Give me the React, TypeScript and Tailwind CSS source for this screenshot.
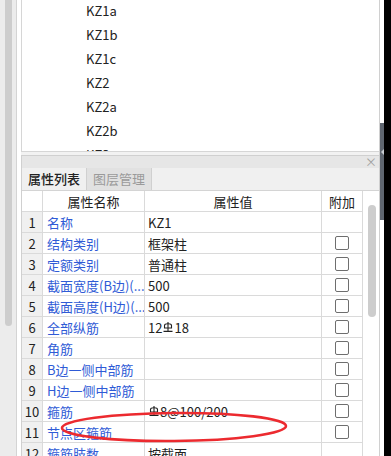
import React from 'react'

const FONT = { fontFamily: '"Noto Sans CJK SC", "Noto Sans", sans-serif' }

const listItems = ['KZ1a', 'KZ1b', 'KZ1c', 'KZ2', 'KZ2a', 'KZ2b', 'KZ3']

// 三级钢符号
function Rebar() {
  return (
    <svg width="10" height="10" viewBox="0 0 10 10" className="mx-[1px]">
      <path d="M1.5 3.5 Q1.5 1.8 5 1.8 Q8.5 1.8 8.5 3.5 L8.5 6 L1.5 6 Z" fill="none" stroke="#222" strokeWidth="1.1" />
      <path d="M5 0 V9 M0.5 9.4 H9.5" fill="none" stroke="#222" strokeWidth="1.1" />
    </svg>
  )
}

type Row = { name: string; value?: React.ReactNode; check: boolean }

const rows: Row[] = [
  { name: '名称', value: 'KZ1', check: false },
  { name: '结构类别', value: '框架柱', check: true },
  { name: '定额类别', value: '普通柱', check: true },
  { name: '截面宽度(B边)(...', value: '500', check: true },
  { name: '截面高度(H边)(...', value: '500', check: true },
  { name: '全部纵筋', value: <>12<Rebar />18</>, check: true },
  { name: '角筋', check: true },
  { name: 'B边一侧中部筋', check: true },
  { name: 'H边一侧中部筋', check: true },
  { name: '箍筋', value: <><Rebar />8@100/200</>, check: true },
  { name: '节点区箍筋', check: true },
  { name: '箍筋肢数', value: '按截面', check: false },
]

const cell = 'h-[21px] border-r border-b border-[#dadada] flex items-center text-[13px] leading-none'

export default function App() {
  return (
    <div className="relative w-[391px] h-[456px] overflow-hidden flex bg-white text-[#222]" style={FONT}>
      {/* left gutter with scrollbar */}
      <div className="w-[16px] shrink-0 bg-[#ececec] pl-[5px]">
        <div className="w-[7px] h-[326px] bg-[#cdcdcd] rounded-b-[4px]" />
      </div>

      {/* main pane */}
      <div className="w-[363px] shrink-0 border-l border-[#d4d4d4] pl-[4px] flex flex-col">
        {/* component list */}
        <div className="h-[152px] shrink-0 border-l border-b border-[#d6d6d6] overflow-hidden bg-white">
          <div className="-mt-[1px] pl-[64px]">
            {listItems.map((k) => (
              <div key={k} className="h-[24px] flex items-center text-[13px] text-[#222]">{k}</div>
            ))}
          </div>
        </div>

        <div className="h-[3px] shrink-0 bg-[#f2f2f2]" />

        {/* property panel */}
        <div className="flex-1 flex flex-col border-l border-t border-[#d0d0d0] min-h-0">
          <div className="h-[12px] shrink-0 bg-[#e6e6e6] flex items-center justify-end pr-[2px]">
            <span className="text-[12px] leading-none text-[#a0a0a0]">×</span>
          </div>
          <div className="h-[23px] shrink-0 bg-[#f0f0f0] border-b border-[#d4d4d4] flex">
            <div className="w-[65px] border-r border-[#d0d0d0] flex items-center justify-center text-[13px] font-medium text-[#222]">属性列表</div>
            <div className="w-[65px] bg-[#e1e1e1] border-r border-[#d0d0d0] flex items-center justify-center text-[13px] text-[#9a9a9a]">图层管理</div>
          </div>

          <div className="flex flex-1 min-h-0">
            <div className="grid grid-cols-[21px_102px_177px_41px] content-start">
              <div className={cell} />
              <div className={`${cell} justify-center`}>属性名称</div>
              <div className={`${cell} justify-center`}>属性值</div>
              <div className={`${cell} justify-center`}>附加</div>
              {rows.map((r, i) => (
                <React.Fragment key={i}>
                  <div className={`${cell} justify-center bg-[#f0f0f0]`}>{i + 1}</div>
                  <div className={`${cell} pl-[4px] text-[#2f5bd6] whitespace-nowrap overflow-hidden`}>{r.name}</div>
                  <div className={`${cell} pl-[3px] whitespace-nowrap`}>{r.value}</div>
                  <div className={`${cell} justify-center`}>
                    {r.check && <div className="w-[14px] h-[14px] border border-[#6e6e6e] rounded-[2px] bg-white" />}
                  </div>
                </React.Fragment>
              ))}
            </div>
            <div className="flex-1 pl-[5px] pt-[14px]">
              <div className="w-[8px] h-[112px] bg-[#cdcdcd] rounded-full" />
            </div>
          </div>
        </div>
      </div>

      {/* right strip */}
      <div className="w-[5px] shrink-0 border-l border-[#d0d0d0] bg-white pt-[123px]">
        <div className="h-[97px] bg-[#5f6670] flex items-center pt-[2px] pl-[1px]">
          <svg width="4" height="8" viewBox="0 0 4 8" className="-mt-[42px]">
            <path d="M4 0 L0 4 L4 8 Z" fill="#c8ccd2" />
          </svg>
        </div>
      </div>
      <div className="w-[7px] shrink-0 bg-black" />

      {/* red annotation */}
      <svg className="absolute inset-0 pointer-events-none" width="391" height="456">
        <ellipse cx="174" cy="427" rx="112" ry="14" fill="none" stroke="#ec2a2f" strokeWidth="2.6" transform="rotate(-0.5 174 427)" />
      </svg>
    </div>
  )
}
